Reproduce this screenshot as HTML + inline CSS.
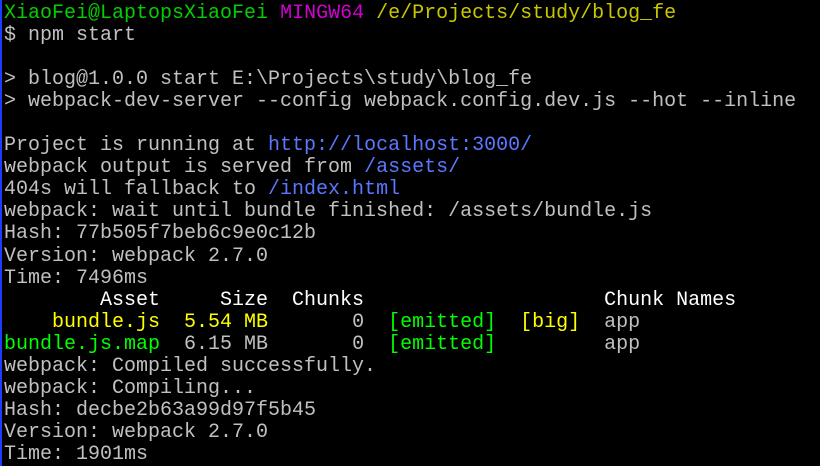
<!DOCTYPE html>
<html><head><style>
html,body{margin:0;padding:0;background:#000;width:820px;height:466px;overflow:hidden}
.b{position:absolute;left:0;top:0;width:2px;height:466px;background:#1e3cff}
pre{margin:0;position:absolute;left:4px;top:3px;font-family:"Liberation Mono",monospace;font-size:20px;line-height:22.05px;color:#c0c0c0;letter-spacing:0}
.g{color:#00d000}.G{color:#00ff00}.m{color:#d000d0}.y{color:#c8c800}.Y{color:#ffff00}.u{color:#5a78ff}.w{color:#fff}
</style></head><body><div class="b"></div><pre><span class="g">XiaoFei@LaptopsXiaoFei</span> <span class="m">MINGW64</span> <span class="y">/e/Projects/study/blog_fe</span>
$ npm start

&gt; blog@1.0.0 start E:\Projects\study\blog_fe
&gt; webpack-dev-server --config webpack.config.dev.js --hot --inline

Project is running at <span class="u">http://localhost:3000/</span>
webpack output is served from <span class="u">/assets/</span>
404s will fallback to <span class="u">/index.html</span>
webpack: wait until bundle finished: /assets/bundle.js
Hash: 77b505f7beb6c9e0c12b
Version: webpack 2.7.0
Time: 7496ms
<span class="w">        Asset     Size  Chunks                    Chunk Names</span>
    <span class="Y">bundle.js  5.54 MB</span>       0  <span class="G">[emitted]</span>  <span class="Y">[big]</span>  app
<span class="G">bundle.js.map</span>  6.15 MB       0  <span class="G">[emitted]</span>         app
webpack: Compiled successfully.
webpack: Compiling...
Hash: decbe2b63a99d97f5b45
Version: webpack 2.7.0
Time: 1901ms</pre></body></html>
